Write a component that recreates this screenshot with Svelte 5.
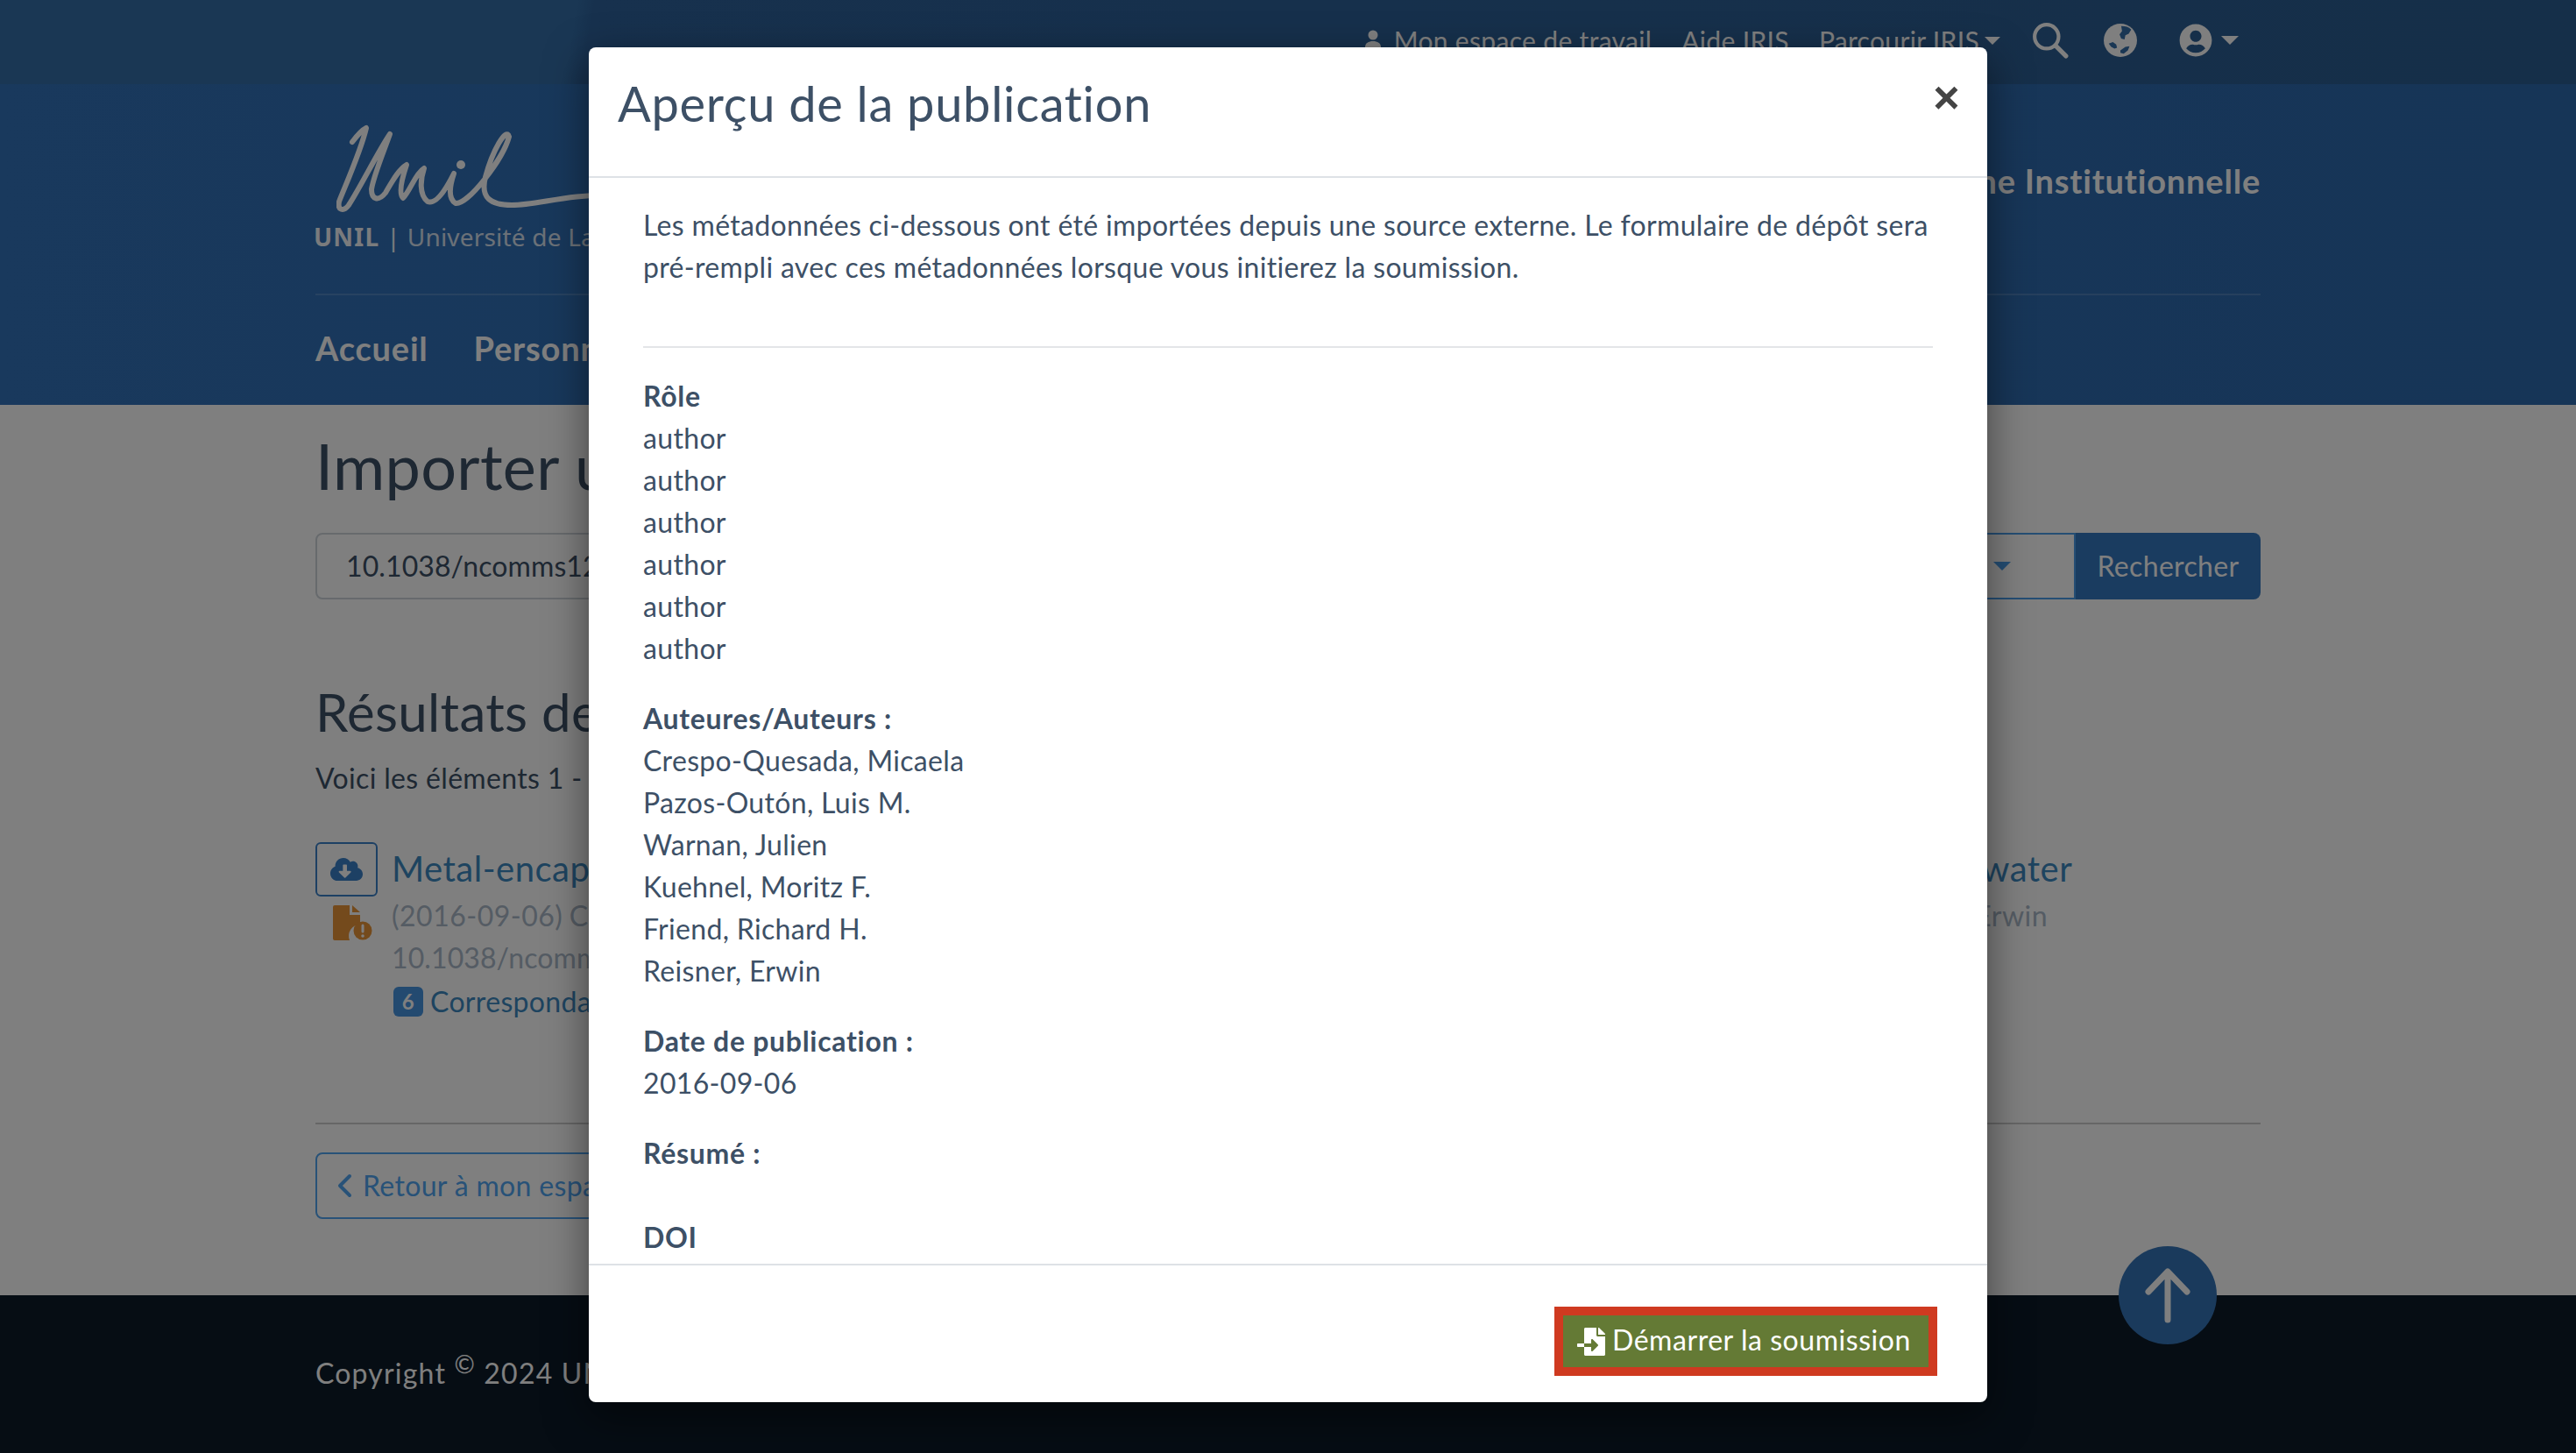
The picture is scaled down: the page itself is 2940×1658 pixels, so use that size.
<script>
	const roles = ['author', 'author', 'author', 'author', 'author', 'author'];
	const authors = [
		'Crespo-Quesada, Micaela',
		'Pazos-Outón, Luis M.',
		'Warnan, Julien',
		'Kuehnel, Moritz F.',
		'Friend, Richard H.',
		'Reisner, Erwin'
	];
</script>

<div class="page">
	<div class="topbar">
		<nav class="toplinks">
			<svg class="person" viewBox="0 0 20 24"><circle cx="10" cy="6" r="5.5" fill="currentColor" /><path d="M1 24v-4c0-5 4-7 9-7s9 2 9 7v4z" fill="currentColor" /></svg>
			<span class="l1">Mon espace de travail</span>
			<span class="l2">Aide IRIS</span>
			<span class="l3">Parcourir IRIS</span>
			<i class="caret small"></i>
			<svg class="search" viewBox="0 0 40 40"><circle cx="16" cy="16" r="13" fill="none" stroke="currentColor" stroke-width="4" /><path d="M26 26l11 11" stroke="currentColor" stroke-width="5" stroke-linecap="round" /></svg>
			<svg class="globe" viewBox="0 0 40 40">
				<circle cx="20" cy="20" r="20" fill="currentColor" />
				<path d="M21 3c5 0 9 1 12 4l-3 5-4 2-1 5-4-1-2-5 3-4zM6 24l5-2 4 3 1 4-3 1-4-2zM20 32l6-4 5-1-2 5-5 4-4-1z" fill="#346ea8" />
			</svg>
			<svg class="user" viewBox="0 0 496 512"><path fill="currentColor" d="M248 8C111 8 0 119 0 256s111 248 248 248 248-111 248-248S385 8 248 8zm0 96c48.6 0 88 39.4 88 88s-39.4 88-88 88-88-39.4-88-88 39.4-88 88-88zm0 344c-58.7 0-111.3-26.6-146.5-68.2 18.8-35.4 55.6-59.8 98.5-59.8 2.4 0 4.8.4 7.1 1.1 13 4.2 26.6 6.9 40.9 6.9 14.3 0 28-2.7 40.9-6.9 2.3-.7 4.7-1.1 7.1-1.1 42.9 0 79.7 24.4 98.5 59.8C359.3 421.4 306.7 448 248 448z" /></svg>
			<i class="caret"></i>
		</nav>
	</div>

	<header class="header">
		<div class="brand">
			<div class="logo">
				<svg viewBox="0 0 320 104" width="320" height="104">
					<path d="M18 20C24 12 30 6 34 4C28 30 10 70 3 88C1 98 8 100 14 92C26 74 48 30 61 11C52 36 42 60 40 74C40 86 48 88 56 78C62 68 70 52 80 46C76 58 70 78 76 84C84 76 90 56 100 50C96 62 94 80 104 88C114 92 126 72 134 56C130 68 126 84 136 90C150 92 190 40 197 14C194 2 178 30 170 60C164 84 176 92 200 92C230 92 260 80 320 80" fill="none" stroke="currentColor" stroke-width="6" stroke-linecap="round" stroke-linejoin="round" />
					<circle cx="142" cy="46" r="5" fill="currentColor" />
				</svg>
				<div class="logotext"><b>UNIL</b><span class="bar">|</span><span class="uni">Université de Lausanne</span></div>
			</div>
			<div class="plat">Plateforme Institutionnelle</div>
		</div>
		<nav class="mainnav">
			<span>Accueil</span>
			<span>Personnes</span>
		</nav>
	</header>

	<main class="main">
		<h1>Importer une publication</h1>
		<div class="searchrow">
			<div class="doi">10.1038/ncomms12345</div>
			<div class="drop"><i class="caret blue"></i></div>
			<div class="go">Rechercher</div>
		</div>
		<h2>Résultats de la recherche</h2>
		<p class="count">Voici les éléments 1 - 1 sur 1</p>
		<div class="result">
			<div class="actions">
				<div class="dl">
					<svg viewBox="0 0 640 512" width="37" height="30"><path fill="currentColor" d="M537.6 226.6c4.1-10.7 6.4-22.4 6.4-34.6 0-53-43-96-96-96-19.7 0-38.1 6-53.3 16.2C367 64.2 315.3 32 256 32c-88.4 0-160 71.6-160 160 0 2.7.1 5.4.2 8.1C40.2 219.8 0 273.2 0 336c0 79.5 64.5 144 144 144h368c70.7 0 128-57.3 128-128 0-61.9-44-113.6-102.4-125.4zm-132.9 88.7L299.3 420.7c-6.2 6.2-16.4 6.2-22.6 0L171.3 315.3c-10.1-10.1-2.9-27.3 11.3-27.3H248V176c0-8.8 7.2-16 16-16h48c8.8 0 16 7.2 16 16v112h65.4c14.2 0 21.4 17.2 11.3 27.3z" /></svg>
				</div>
				<svg class="docicon" viewBox="0 0 46 40" width="46" height="40">
					<path d="M2 0h17v11h12v11a13 13 0 0 0-12 18H2a2 2 0 0 1-2-2V2a2 2 0 0 1 2-2zM22 0l9 8h-9z" fill="#e89438" />
					<circle cx="34" cy="29" r="10.5" fill="#e89438" />
					<path d="M34 23v7" stroke="#fff" stroke-width="3" stroke-linecap="round" />
					<circle cx="34" cy="35" r="1.8" fill="#fff" />
				</svg>
			</div>
			<div class="info">
				<div class="rtitle">Metal-encapsulated organolead halide perovskite photocathode for solar-driven hydrogen evolution in water</div>
				<div class="meta">(2016-09-06) Crespo-Quesada, Micaela; Pazos-Outón, Luis M.; Warnan, Julien; Kuehnel, Moritz F.; Friend, Richard H.; Reisner, Erwin</div>
				<div class="meta doiline">10.1038/ncomms12555</div>
				<div class="match"><span class="badge">6</span>Correspondances</div>
			</div>
		</div>
		<hr class="rule" />
		<div class="back">
			<svg viewBox="0 0 18 28" width="18" height="28"><path d="M15 3L4 14l11 11" fill="none" stroke="currentColor" stroke-width="4" stroke-linecap="round" stroke-linejoin="round" /></svg>
			Retour à mon espace de travail
		</div>
	</main>

	<footer class="footer">Copyright <sup>©</sup> 2024 UNIL</footer>

	<div class="totop">
		<svg viewBox="0 0 56 64" width="56" height="64"><path d="M28 60V6M6 28L28 5l22 23" fill="none" stroke="currentColor" stroke-width="7" stroke-linecap="round" stroke-linejoin="round" /></svg>
	</div>

	<div class="backdrop"></div>

	<section class="modal">
		<div class="mhead">
			<h3>Aperçu de la publication</h3>
			<span class="close">×</span>
		</div>
		<div class="mbody">
			<p class="intro">Les métadonnées ci-dessous ont été importées depuis une source externe. Le formulaire de dépôt sera pré-rempli avec ces métadonnées lorsque vous initierez la soumission.</p>
			<hr />
			<div class="field">
				<b>Rôle</b>
				{#each roles as r}
					<div>{r}</div>
				{/each}
			</div>
			<div class="field">
				<b>Auteures/Auteurs :</b>
				{#each authors as a}
					<div>{a}</div>
				{/each}
			</div>
			<div class="field">
				<b>Date de publication :</b>
				<div>2016-09-06</div>
			</div>
			<div class="field resume">
				<b>Résumé :</b>
			</div>
			<div class="field">
				<b>DOI</b>
				<div>10.1038/ncomms12555</div>
			</div>
		</div>
		<div class="mfoot">
			<div class="start">
				<svg viewBox="0 0 512 512" width="32" height="32"><path fill="currentColor" d="M16 288c-8.8 0-16 7.2-16 16v32c0 8.8 7.2 16 16 16h112v-64zm489-183L407.1 7c-4.5-4.5-10.6-7-17-7H384v128h128v-6.1c0-6.3-2.5-12.4-7-16.9zm-153 31V0H152c-13.3 0-24 10.7-24 24v264h128v-65.2c0-14.3 17.3-21.4 27.4-11.3L379 308c6.6 6.7 6.6 17.4 0 24l-95.7 96.4c-10.1 10.1-27.4 3-27.4-11.3V352H128v136c0 13.3 10.7 24 24 24h336c13.3 0 24-10.7 24-24V160H376c-13.2 0-24-10.8-24-24z" /></svg>
				<span>Démarrer la soumission</span>
			</div>
		</div>
	</section>
</div>

<style>
	:global(body) {
		margin: 0;
		background: #fff;
	}
	.page {
		position: relative;
		width: 2940px;
		height: 1658px;
		overflow: hidden;
		display: flex;
		flex-direction: column;
		font-family: Lato, "Noto Sans", sans-serif;
		font-size: 32px;
		line-height: 48px;
		letter-spacing: 0.33px;
		color: #3d5066;
	}
	.topbar {
		flex: 0 0 96px;
		background: linear-gradient(100deg, #346ea8 0 650px, #2e629c 670px, #2b5e92 100%);
		color: #fff;
		padding-right: 385px;
		display: flex;
		justify-content: flex-end;
		align-items: center;
	}
	.toplinks {
		display: flex;
		align-items: center;
		font-size: 30px;
		padding-bottom: 4px;
	}
	.person {
		width: 20px;
		height: 24px;
		margin-right: 14px;
	}
	.l2,
	.l3 {
		margin-left: 34px;
	}
	.caret {
		display: inline-block;
		border-left: 10px solid transparent;
		border-right: 10px solid transparent;
		border-top: 10px solid #fff;
	}
	.caret.small {
		margin-left: 6px;
		border-width: 9px 9px 0;
	}
	.caret.blue {
		border-top-color: #4a9ce8;
	}
	.search {
		width: 42px;
		height: 42px;
		margin-left: 36px;
	}
	.globe {
		width: 38px;
		height: 38px;
		margin-left: 40px;
	}
	.user {
		width: 38px;
		height: 38px;
		margin-left: 48px;
		margin-right: 10px;
	}
	.header {
		flex: 0 0 366px;
		box-sizing: border-box;
		background: linear-gradient(90deg, #3272ba, #2d6aae);
		padding: 0 360px;
		color: #fff;
	}
	.brand {
		height: 241px;
		box-sizing: border-box;
		border-bottom: 2px solid rgba(255, 255, 255, 0.15);
		display: flex;
		justify-content: space-between;
		padding-top: 46px;
	}
	.logo {
		display: flex;
		flex-direction: column;
		margin-left: 24px;
	}
	.logotext {
		margin-left: -26px;
		margin-top: 7px;
		font-family: "Noto Sans", sans-serif;
		font-size: 28px;
		line-height: 34px;
		white-space: nowrap;
		opacity: 0.95;
	}
	.logotext b {
		letter-spacing: 1.2px;
	}
	.bar {
		margin: 0 8px;
		letter-spacing: 0;
	}
	.uni {
		letter-spacing: 0.2px;
		opacity: 0.85;
	}
	.plat {
		font-size: 38px;
		font-weight: 700;
		margin-top: 40px;
		letter-spacing: 0.8px;
	}
	.mainnav {
		display: flex;
		gap: 52px;
		font-size: 38px;
		font-weight: 700;
		padding-top: 36px;
		letter-spacing: 0.8px;
	}
	.main {
		flex: 1;
		padding: 29px 360px 0;
		background: #fff;
		min-height: 0;
	}
	h1 {
		margin: 0;
		font-size: 72px;
		line-height: 80px;
		font-weight: 400;
	}
	.searchrow {
		display: flex;
		margin-top: 37px;
		height: 76px;
	}
	.doi {
		flex: 1;
		box-sizing: border-box;
		border: 2px solid #ced4da;
		border-radius: 8px 0 0 8px;
		padding: 12px 33px;
		letter-spacing: 0.1px;
	}
	.drop {
		width: 162px;
		box-sizing: border-box;
		border: 2px solid #4a9ce8;
		border-left: 0;
		display: flex;
		align-items: center;
		padding-left: 68px;
	}
	.go {
		width: 211px;
		background: #3478c0;
		color: #fff;
		border-radius: 0 8px 8px 0;
		text-align: center;
		line-height: 76px;
	}
	h2 {
		margin: 92px 0 0;
		font-size: 60px;
		line-height: 72px;
		font-weight: 400;
	}
	.count {
		margin: 16px 0 0;
	}
	.result {
		display: flex;
		gap: 16px;
		margin-top: 49px;
	}
	.actions {
		display: flex;
		flex-direction: column;
		align-items: center;
		width: 71px;
		flex: none;
	}
	.dl {
		box-sizing: border-box;
		width: 71px;
		height: 62px;
		border: 2px solid #3a80c8;
		border-radius: 6px;
		color: #3a80c8;
		display: flex;
		align-items: center;
		justify-content: center;
	}
	.docicon {
		margin: 10px 0 0 14px;
	}
	.info {
		min-width: 0;
	}
	.rtitle {
		font-size: 40px;
		line-height: 60px;
		letter-spacing: 0.5px;
		word-spacing: -3px;
		color: #3c88c0;
		white-space: nowrap;
	}
	.meta {
		color: #aab8c8;
		white-space: nowrap;
		line-height: 48px;
		letter-spacing: 0.5px;
		word-spacing: -1.4px;
	}
	.doiline {
		letter-spacing: 0.1px;
	}
	.match {
		display: flex;
		align-items: center;
		color: #3c88c0;
		margin-top: 4px;
		height: 44px;
	}
	.badge {
		width: 34px;
		height: 34px;
		border-radius: 6px;
		background: #4694e0;
		color: #fff;
		font-size: 24px;
		font-weight: 700;
		line-height: 34px;
		text-align: center;
		margin: 0 8px 0 2px;
	}
	.rule {
		margin: 116px 0 0;
		border: 0;
		border-top: 2px solid #ccc;
	}
	.back {
		box-sizing: border-box;
		margin-top: 32px;
		width: 640px;
		height: 76px;
		border: 2px solid #50a4f0;
		border-radius: 8px;
		color: #50a4f0;
		display: flex;
		align-items: center;
		gap: 12px;
		padding-left: 22px;
		white-space: nowrap;
	}
	.footer {
		flex: 0 0 180px;
		box-sizing: border-box;
		background: #0c1a28;
		color: #fff;
		padding: 65px 360px 0;
		letter-spacing: 1.2px;
	}
	.footer sup {
		font-size: 28px;
		line-height: 0;
	}
	.totop {
		position: absolute;
		left: 2418px;
		top: 1422px;
		width: 112px;
		height: 112px;
		border-radius: 50%;
		background: #3474b8;
		color: #fff;
		display: flex;
		align-items: center;
		justify-content: center;
	}
	.backdrop {
		position: absolute;
		inset: 0;
		background: rgba(0, 0, 0, 0.5);
	}
	.modal {
		position: absolute;
		left: 672px;
		top: 54px;
		width: 1596px;
		height: 1546px;
		background: #fff;
		border-radius: 8px;
		box-shadow: 0 16px 48px rgba(0, 0, 0, 0.5);
		display: flex;
		flex-direction: column;
		overflow: hidden;
	}
	.mhead {
		flex: 0 0 149px;
		box-sizing: border-box;
		border-bottom: 2px solid #dee2e6;
		padding: 28px 32px 0 33px;
		display: flex;
		justify-content: space-between;
		align-items: flex-start;
	}
	h3 {
		margin: 0;
		font-size: 56px;
		line-height: 72px;
		font-weight: 400;
		letter-spacing: 0.7px;
	}
	.close {
		font-family: "Liberation Sans", sans-serif;
		font-size: 52px;
		line-height: 54px;
		font-weight: 700;
		color: #444;
		margin-top: 2px;
		margin-right: -1px;
	}
	.mbody {
		flex: 1;
		min-height: 0;
		overflow: hidden;
		padding: 30px 62px 0;
	}
	.intro {
		margin: 0 0 66px;
	}
	.mbody hr {
		margin: 0 0 31px;
		border: 0;
		border-top: 2px solid #e3e5e8;
	}
	.field {
		margin-bottom: 32px;
	}
	.field b {
		font-weight: 700;
		letter-spacing: 0.7px;
	}
	.resume {
		margin-bottom: 48px;
	}
	.mfoot {
		flex: 0 0 158px;
		box-sizing: border-box;
		border-top: 2px solid #dee2e6;
		padding: 47px 57px 0 0;
		display: flex;
		justify-content: flex-end;
		align-items: flex-start;
	}
	.start {
		box-sizing: border-box;
		width: 437px;
		height: 79px;
		border: 10px solid #cf3a20;
		background: #647a35;
		color: #fff;
		display: flex;
		align-items: center;
		padding-left: 16px;
		gap: 8px;
		letter-spacing: 0.55px;
		white-space: nowrap;
	}
	.start span {
		padding-bottom: 3px;
	}
</style>
